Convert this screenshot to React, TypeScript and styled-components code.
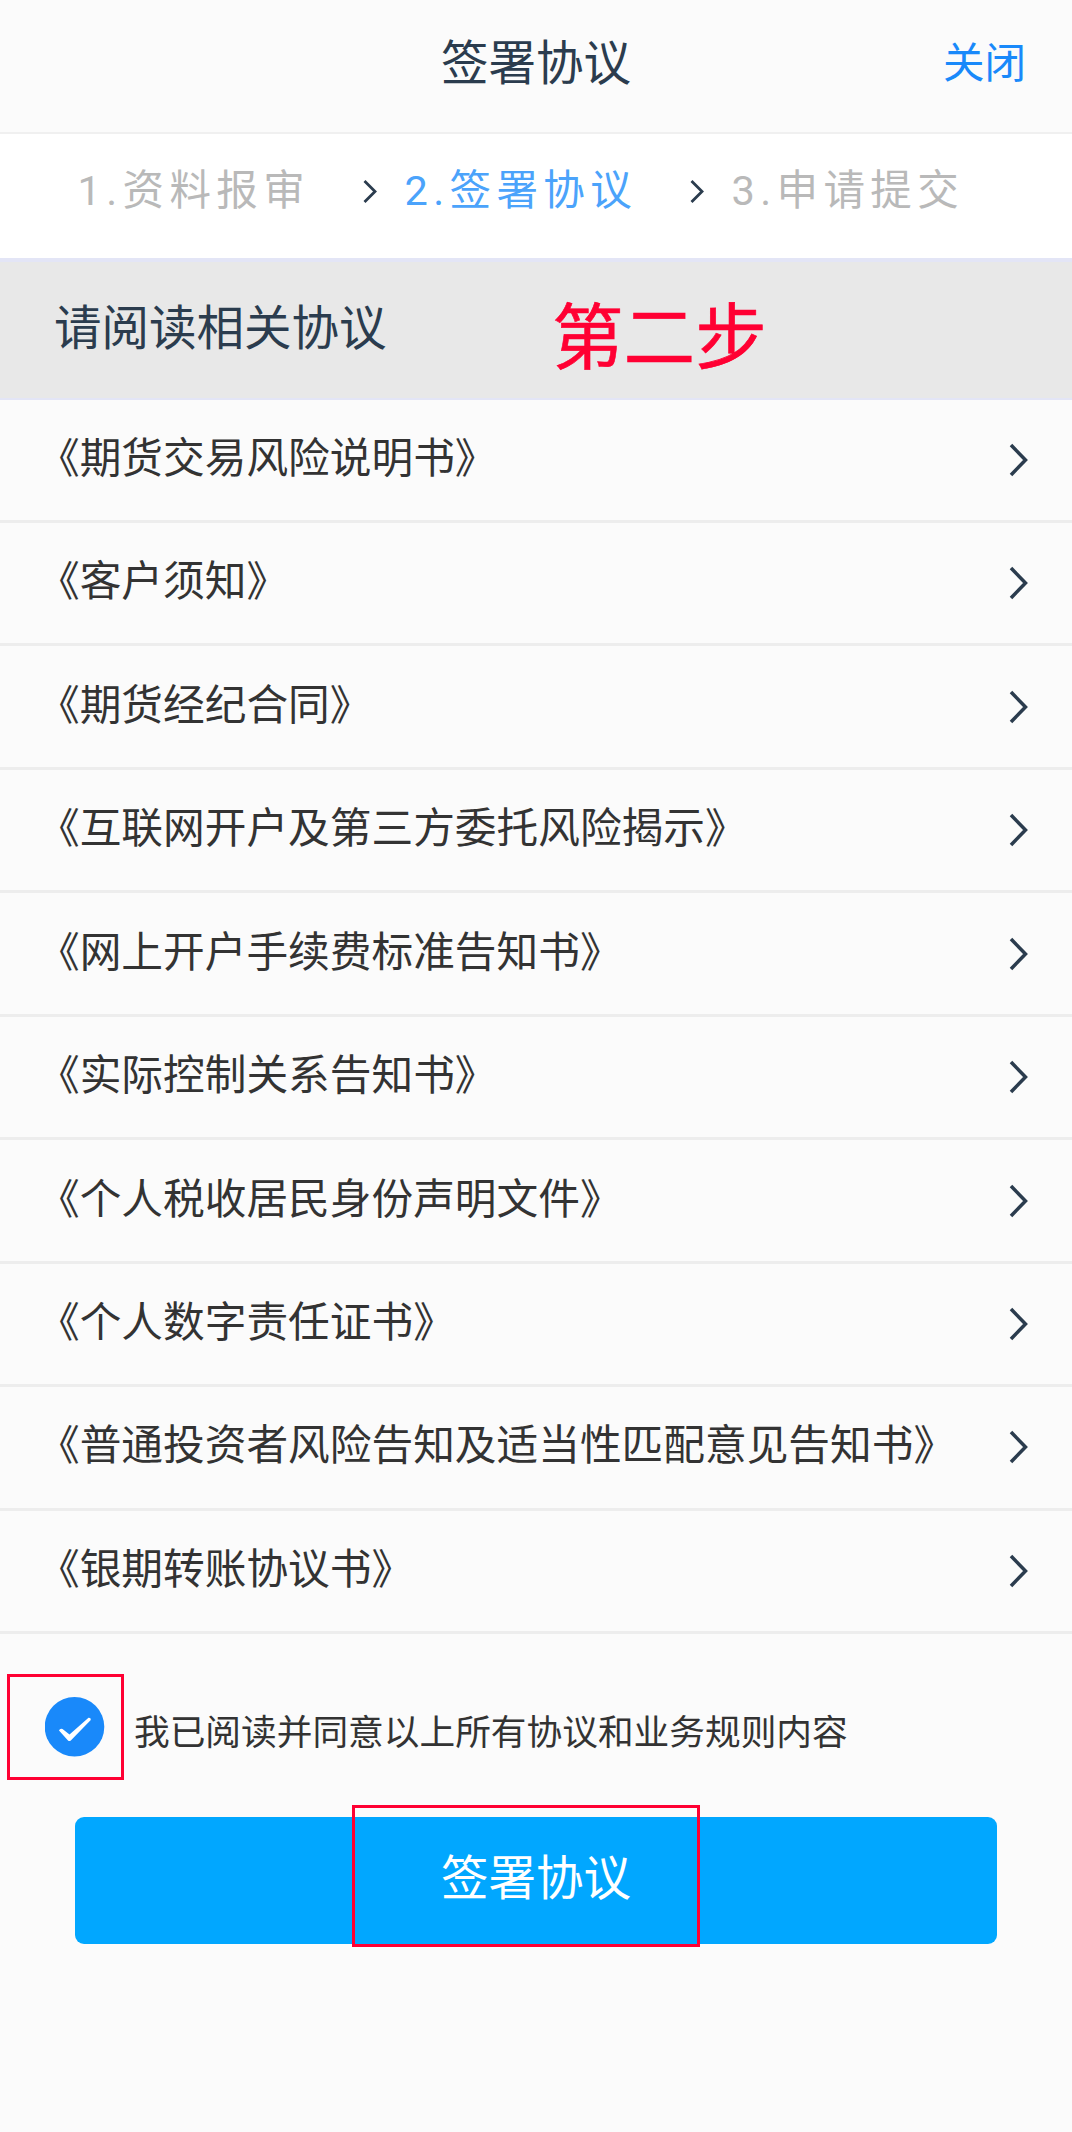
import React from "react";
import styled, { createGlobalStyle } from "styled-components";

const Global = createGlobalStyle`
  * { box-sizing: border-box; }
  body { margin: 0; background: #fbfbfb; }
`;

const Page = styled.div`
  width: 1072px;
  height: 2132px;
  overflow: hidden;
  display: flex;
  flex-direction: column;
  background: #fbfbfb;
  color: #2b3c4e;
  font-family: Roboto, "Noto Sans CJK SC", sans-serif;
`;

const Header = styled.header`
  flex: none;
  height: 134px;
  padding: 0 46px 4px;
  border-bottom: 2px solid #f0f0f0;
  display: grid;
  grid-template-columns: 1fr auto 1fr;
  align-items: center;
`;

const Title = styled.h1`
  grid-column: 2;
  margin: 0;
  font-size: 47.5px;
  line-height: 60px;
  font-weight: 400;
`;

const Close = styled.a`
  justify-self: end;
  color: #1989fa;
  font-size: 41.5px;
  line-height: 60px;
`;

const Steps = styled.nav`
  flex: none;
  height: 124px;
  padding: 0 0 11px 77.5px;
  background: #fff;
  display: flex;
  align-items: center;
`;

const Step = styled.span<{ $active?: boolean; $width: number }>`
  flex: none;
  width: ${(p) => p.$width}px;
  font-size: 41.5px;
  line-height: 60px;
  letter-spacing: 5.4px;
  white-space: nowrap;
  color: ${(p) => (p.$active ? "#4ba3fb" : "#b9b9b9")};
`;

const StepArrow = styled.svg`
  flex: none;
  width: 16px;
  height: 26px;
  margin-right: 26px;
`;

const Section = styled.div`
  flex: none;
  height: 141.5px;
  padding: 0 54px;
  border-top: 4px solid #e3e5f6;
  border-bottom: 2px solid #e3e5f6;
  background: #e8e8e8;
  display: flex;
  align-items: center;
`;

const SectionTitle = styled.h2`
  margin: 0 0 1px;
  width: 498px;
  font-size: 47.5px;
  line-height: 60px;
  font-weight: 400;
`;

const StepNote = styled.strong`
  margin-top: 18px;
  color: #ff0033;
  font-size: 71.6px;
  line-height: 90px;
  font-weight: 400;
  -webkit-text-stroke: 0.6px #ff0033;
`;

const List = styled.ul`
  flex: none;
  margin: 0;
  padding: 0;
  list-style: none;
`;

const Row = styled.li`
  height: 123.48px;
  padding: 0 43px 0 38px;
  border-bottom: 3px solid #ededed;
  display: flex;
  align-items: center;
  justify-content: space-between;
`;

const Name = styled.span`
  margin-bottom: 2px;
  font-size: 41.7px;
  line-height: 60px;
  color: #333;
  white-space: nowrap;
`;

const RowArrow = styled.svg`
  width: 20px;
  height: 36px;
`;

const Agree = styled.label`
  flex: none;
  height: 106px;
  margin: 40px 0 0 7px;
  display: flex;
  align-items: center;
`;

const CheckFrame = styled.span`
  width: 117px;
  height: 106px;
  padding-left: 35px;
  border: 3px solid #ff0033;
  display: flex;
  align-items: center;
`;

const AgreeText = styled.span`
  margin: 11px 0 0 10px;
  font-size: 35.7px;
  line-height: 50px;
  color: #333;
`;

const Submit = styled.button`
  flex: none;
  width: 922px;
  height: 127px;
  margin: 37px 0 0 75px;
  padding: 0;
  border: 0;
  border-radius: 9px;
  background: #01a7ff;
  display: flex;
  align-items: center;
  font-family: inherit;
  color: #fff;
`;

const SubmitFrame = styled.span`
  flex: none;
  width: 348px;
  height: 142px;
  margin: -12px 0 -3px 277px;
  padding: 6px 0 0 86px;
  border: 3px solid #ff0033;
  display: flex;
  align-items: center;
  font-size: 47.5px;
  line-height: 60px;
`;

const documents = [
  "《期货交易风险说明书》",
  "《客户须知》",
  "《期货经纪合同》",
  "《互联网开户及第三方委托风险揭示》",
  "《网上开户手续费标准告知书》",
  "《实际控制关系告知书》",
  "《个人税收居民身份声明文件》",
  "《个人数字责任证书》",
  "《普通投资者风险告知及适当性匹配意见告知书》",
  "《银期转账协议书》",
];

const StepChevron = () => (
  <StepArrow viewBox="0 0 16 26" fill="none" stroke="#2b3c4e" strokeWidth="2.8">
    <path d="M1.5 3 12 13.5 1.5 24" />
  </StepArrow>
);

export default function App() {
  return (
    <Page>
      <Global />
      <Header>
        <Title>签署协议</Title>
        <Close>关闭</Close>
      </Header>
      <Steps>
        <Step $width={285}>1.资料报审</Step>
        <StepChevron />
        <Step $width={285} $active>2.签署协议</Step>
        <StepChevron />
        <Step $width={285}>3.申请提交</Step>
      </Steps>
      <Section>
        <SectionTitle>请阅读相关协议</SectionTitle>
        <StepNote>第二步</StepNote>
      </Section>
      <List>
        {documents.map((name) => (
          <Row key={name}>
            <Name>{name}</Name>
            <RowArrow viewBox="0 0 20 36" fill="none" stroke="#2b3c4e" strokeWidth="3.5">
              <path d="M2 3 16.5 18 2 33" />
            </RowArrow>
          </Row>
        ))}
      </List>
      <Agree>
        <CheckFrame>
          <svg width="60" height="60" viewBox="0 0 60 60" fill="none">
            <circle cx="29.5" cy="29.8" r="29.8" fill="#1989fa" />
            <path
              d="M14 33.5Q15 31 17.5 32L24.5 37.5 43.5 20.8Q46 20.5 45.8 23L25.8 43.5Q24.3 44.6 23 43.5Z"
              fill="#fff"
            />
          </svg>
        </CheckFrame>
        <AgreeText>我已阅读并同意以上所有协议和业务规则内容</AgreeText>
      </Agree>
      <Submit>
        <SubmitFrame>签署协议</SubmitFrame>
      </Submit>
    </Page>
  );
}
